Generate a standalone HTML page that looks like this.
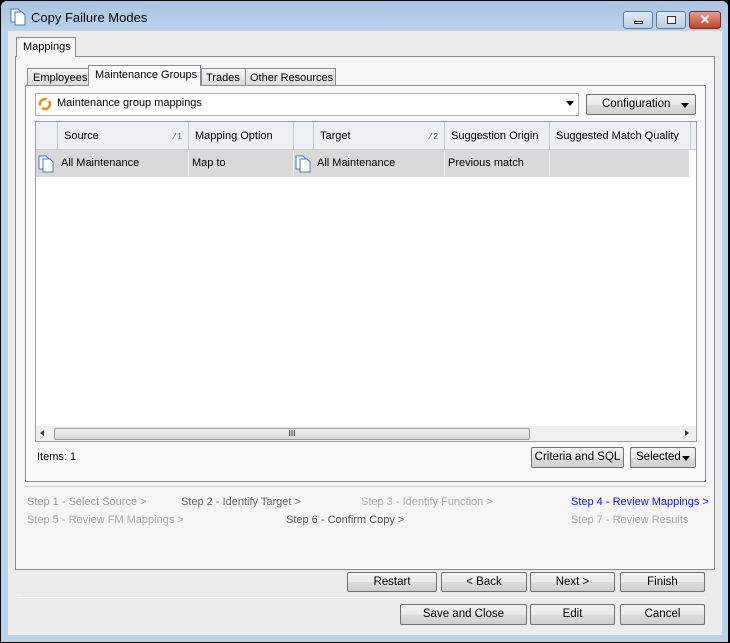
<!DOCTYPE html><html><head><style>
*{box-sizing:border-box}body{margin:0;width:730px;height:643px;background:#000;font-family:"Liberation Sans",sans-serif;font-size:11px;color:#000;position:relative;overflow:hidden}
.a{position:absolute}
.btn{position:absolute;border:1px solid #707070;border-radius:2px;background:linear-gradient(#f2f2f2,#ebebeb 50%,#dddddd 51%,#cfcfcf);text-align:center;line-height:18px;font-size:11.5px}
.th{position:absolute;top:0;height:28px;line-height:28px;border-right:1px solid #c8ccd4;padding-left:6px}
.td{position:absolute;top:0;height:27px;line-height:27px;border-right:1px solid #f0f0f0;padding-left:3px}
.step{position:absolute;font-size:11px;color:#999}
</style></head><body>
<div class="a" style="left:1px;top:1px;width:727px;height:641px;background:#bcd3ec;border-radius:6px 6px 0 0"></div>
<div class="a" style="left:1px;top:1px;width:727px;height:30px;background:linear-gradient(#a9c4e3,#bcd3ec);border-radius:6px 6px 0 0"></div>
<svg class="a" style="left:10px;top:8px" width="16" height="18"><path d="M1 1h7l3 3v10H1z" fill="#fff" stroke="#4a78b8"/><path d="M5 4h7l3 3v10H5z" fill="#fff" stroke="#4a78b8"/></svg>
<div class="a" style="left:31px;top:10px;font-size:13px">Copy Failure Modes</div>
<div class="a" style="left:623px;top:11px;width:30px;height:18px;border:1px solid #5a7aa0;border-radius:3px;background:linear-gradient(#dfeaf6,#b9cde4)"><div class="a" style="left:10px;top:9px;width:9px;height:3px;border:1px solid #333;background:#fff"></div></div>
<div class="a" style="left:656px;top:11px;width:30px;height:18px;border:1px solid #5a7aa0;border-radius:3px;background:linear-gradient(#dfeaf6,#b9cde4)"><div class="a" style="left:10px;top:4px;width:9px;height:8px;border:1px solid #333;background:#fff"></div></div>
<div class="a" style="left:689px;top:11px;width:32px;height:18px;border:1px solid #7a2a20;border-radius:3px;background:linear-gradient(#e8a090,#c0402a);color:#fff;font-weight:bold;text-align:center;line-height:16px;font-size:13px">✕</div>
<div class="a" style="left:8px;top:31px;width:714px;height:604px;background:#ececec"></div>
<div class="a" style="left:15px;top:56px;width:700px;height:514px;border:1px solid #898c95;background:#f6f6f6"></div>
<div class="a" style="left:16px;top:37px;width:60px;height:20px;border:1px solid #898c95;border-bottom:none;background:#f6f6f6;padding:3px 0 0 6px">Mappings</div>
<div class="a" style="left:25px;top:85px;width:681px;height:397px;border:1px solid #898c95;background:#f9f9f9"></div>
<div class="a" style="left:27px;top:68px;width:62px;height:18px;border:1px solid #898c95;background:linear-gradient(#f4f4f4,#dcdcdc);padding:3px 0 0 5px">Employees</div>
<div class="a" style="left:88px;top:65px;width:113px;height:21px;border:1px solid #898c95;border-bottom:none;background:#f9f9f9;padding:3px 0 0 6px">Maintenance Groups</div>
<div class="a" style="left:201px;top:68px;width:45px;height:18px;border:1px solid #898c95;background:linear-gradient(#f4f4f4,#dcdcdc);padding:3px 0 0 4px">Trades</div>
<div class="a" style="left:245px;top:68px;width:91px;height:18px;border:1px solid #898c95;background:linear-gradient(#f4f4f4,#dcdcdc);padding:3px 0 0 4px">Other Resources</div>
<div class="a" style="left:35px;top:93px;width:544px;height:23px;border:1px solid #abadb3;background:#fff"></div>
<svg class="a" style="left:37px;top:96px" width="18" height="16"><circle cx="8" cy="8" r="5" fill="none" stroke="#f08a10" stroke-width="2.5" stroke-dasharray="11 3"/></svg>
<div class="a" style="left:57px;top:97px">Maintenance group mappings</div>
<div class="a" style="left:566px;top:101px;border:4px solid transparent;border-top:5px solid #000"></div>
<div class="btn" style="left:586px;top:94px;width:110px;height:21px;text-align:left;padding-left:15px">Configuration<span class="a" style="right:6px;top:8px;border:4px solid transparent;border-top:5px solid #000"></span></div>
<div class="a" style="left:35px;top:121px;width:662px;height:321px;border:1px solid #9aa0aa;background:#fff;overflow:hidden">
<div class="a" style="left:0;top:0;width:660px;height:28px;background:#eef0f4;border-bottom:1px solid #c8ccd4">
<div class="th" style="left:0;width:22px"></div>
<div class="th" style="left:22px;width:131px">Source<span class="a" style="right:6px;top:1px;font-size:8px;color:#555">⁄ 1</span></div>
<div class="th" style="left:153px;width:105px">Mapping Option</div>
<div class="th" style="left:258px;width:20px"></div>
<div class="th" style="left:278px;width:131px">Target<span class="a" style="right:6px;top:1px;font-size:8px;color:#555">⁄ 2</span></div>
<div class="th" style="left:409px;width:105px">Suggestion Origin</div>
<div class="th" style="left:514px;width:141px">Suggested Match Quality</div>
</div>
<div class="a" style="left:0;top:28px;width:653px;height:27px;background:#d9d9d9">
<svg class="a" style="left:2px;top:5px" width="16" height="18"><path d="M1 1h7l3 3v10H1z" fill="#fff" stroke="#4a78b8"/><path d="M5 4h7l3 3v10H5z" fill="#fff" stroke="#4a78b8"/></svg>
<div class="td" style="left:22px;width:131px">All Maintenance</div>
<div class="td" style="left:153px;width:105px">Map to</div>
<svg class="a" style="left:259px;top:5px" width="16" height="18"><path d="M1 1h7l3 3v10H1z" fill="#fff" stroke="#4a78b8"/><path d="M5 4h7l3 3v10H5z" fill="#fff" stroke="#4a78b8"/></svg>
<div class="td" style="left:278px;width:131px">All Maintenance</div>
<div class="td" style="left:409px;width:105px">Previous match</div>
</div>
<div class="a" style="left:0;top:304px;width:660px;height:16px;background:#f0f0f0">
<div class="a" style="left:4px;top:4px;border:3px solid transparent;border-right:4px solid #333;border-left:none"></div>
<div class="a" style="left:18px;top:2px;width:476px;height:12px;border:1px solid #999;border-radius:2px;background:linear-gradient(#f0f0f0,#d8d8d8);text-align:center;font-size:8px;line-height:10px">III</div>
<div class="a" style="left:649px;top:4px;border:3px solid transparent;border-left:4px solid #333;border-right:none"></div>
</div></div>
<div class="a" style="left:37px;top:451px">Items: 1</div>
<div class="btn" style="left:531px;top:447px;width:93px;height:21px">Criteria and SQL</div>
<div class="btn" style="left:630px;top:447px;width:66px;height:21px;text-align:left;padding-left:5px">Selected<span class="a" style="right:5px;top:8px;border:4px solid transparent;border-top:5px solid #000"></span></div>
<div class="a" style="left:25px;top:486px;width:681px;height:1px;background:#d0d0d0"></div>
<div class="step" style="left:27px;top:496px">Step 1 - Select Source &gt;</div>
<div class="step" style="left:181px;top:496px;color:#666">Step 2 - Identify Target &gt;</div>
<div class="step" style="left:361px;top:496px;color:#aaa">Step 3 - Identify Function &gt;</div>
<div class="step" style="left:571px;top:496px;color:#1010f0">Step 4 - Review Mappings &gt;</div>
<div class="step" style="left:27px;top:514px;color:#aaa">Step 5 - Review FM Mappings &gt;</div>
<div class="step" style="left:286px;top:514px;color:#555">Step 6 - Confirm Copy &gt;</div>
<div class="step" style="left:571px;top:514px;color:#aaa">Step 7 - Review Results</div>
<div class="btn" style="left:347px;top:572px;width:90px;height:20px">Restart</div>
<div class="btn" style="left:441px;top:572px;width:86px;height:20px">&lt; Back</div>
<div class="btn" style="left:530px;top:572px;width:85px;height:20px">Next &gt;</div>
<div class="btn" style="left:620px;top:572px;width:85px;height:20px">Finish</div>
<div class="a" style="left:17px;top:597px;width:688px;height:1px;background:#c8c8c8;border-bottom:1px solid #fff"></div>
<div class="btn" style="left:400px;top:604px;width:127px;height:21px">Save and Close</div>
<div class="btn" style="left:530px;top:604px;width:85px;height:21px">Edit</div>
<div class="btn" style="left:620px;top:604px;width:85px;height:21px">Cancel</div>
</body></html>
